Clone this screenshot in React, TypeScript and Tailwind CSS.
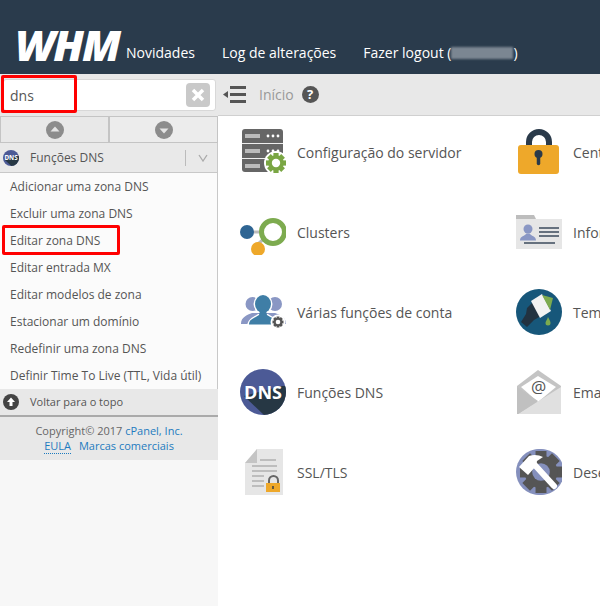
import * as React from "react";

const FONT = "font-['Open_Sans',sans-serif]";

function Gear({ cx, cy, r, fill, halo }: { cx: number; cy: number; r: number; fill: string; halo: string }) {
  const angles = [0, 45, 90, 135];
  return (
    <g>
      <circle cx={cx} cy={cy} r={r + 2} fill={halo} />
      {angles.map((a) => (
        <rect
          key={a}
          x={cx - r * 0.26}
          y={cy - r}
          width={r * 0.52}
          height={r * 2}
          fill={fill}
          transform={`rotate(${a} ${cx} ${cy})`}
        />
      ))}
      <circle cx={cx} cy={cy} r={r * 0.78} fill={fill} />
      <circle cx={cx} cy={cy} r={r * 0.42} fill={halo} />
    </g>
  );
}

function Icon({ children, size = 46 }: { children: React.ReactNode; size?: number }) {
  return (
    <svg width={size} height={size} viewBox="0 0 46 46" className="shrink-0">
      {children}
    </svg>
  );
}

function ServerIcon() {
  return (
    <Icon>
      <rect x="2" y="0" width="41" height="43" rx="3" fill="#666" />
      <rect x="2" y="14" width="41" height="1" fill="#eee" />
      <rect x="2" y="29" width="41" height="1" fill="#eee" />
      <rect x="5" y="5" width="15" height="4" fill="#bbb" />
      <rect x="5" y="20" width="15" height="4" fill="#bbb" />
      <rect x="5" y="35" width="15" height="4" fill="#bbb" />
      {[28, 33, 38].map((x) => (
        <React.Fragment key={x}>
          <circle cx={x} cy="7" r="1.4" fill="#fff" />
          <circle cx={x} cy="22" r="1.4" fill="#fff" />
        </React.Fragment>
      ))}
      <Gear cx={36} cy={34} r={10} fill="#7aa644" halo="#fff" />
    </Icon>
  );
}

function ClusterIcon() {
  return (
    <Icon>
      <path d="M13 23H25M18 35L26 28" stroke="#bbb" strokeWidth="3" />
      <circle cx="33" cy="23" r="11.5" fill="#fff" stroke="#7dab4f" strokeWidth="5" />
      <circle cx="7" cy="23" r="7" fill="#2f6593" />
      <circle cx="18" cy="40" r="7" fill="#eea82a" />
    </Icon>
  );
}

function UsersIcon() {
  return (
    <Icon>
      <circle cx="12.5" cy="15" r="7" fill="#8a97c4" />
      <circle cx="35" cy="15" r="7" fill="#8a97c4" />
      <path d="M1 35C1 28 7 26 12 24H35C40 26 46 28 46 35Z" fill="#8a97c4" />
      <circle cx="23" cy="15" r="9.5" fill="#fff" />
      <path d="M7 37C8 29 14 28 18 25H28C32 28 38 29 39 37Z" fill="#fff" />
      <ellipse cx="23" cy="15" rx="8" ry="9" fill="#3f7ea6" />
      <path d="M9 35.500C9 30 15 29 19 26L20 22H26L27 26C31 29 37 30 37 35.500Z" fill="#3f7ea6" />
      <Gear cx={38} cy={33} r={5.500} fill="#555" halo="#fff" />
    </Icon>
  );
}

function DnsIcon({ id, size = 46 }: { id: string; size?: number }) {
  return (
    <Icon size={size}>
      <clipPath id={id}>
        <circle cx="23" cy="23" r="23" />
      </clipPath>
      <circle cx="23" cy="23" r="23" fill="#4c5a96" />
      <polygon points="4,27 24,46 46,46 46,17 42,17" fill="#263744" clipPath={`url(#${id})`} />
      <text x="23" y="29.500" textAnchor="middle" fontSize="18" fontWeight="700" fill="#fff" fontFamily="'Open Sans',sans-serif">
        DNS
      </text>
    </Icon>
  );
}

function SslIcon() {
  return (
    <Icon>
      <polygon points="17,0 43,0 43,46 5,46 5,14" fill="#e6e6e6" />
      <polygon points="17,0 17,14 5,14" fill="#c4c4c4" />
      <path d="M20 11H36M12 17H37M12 22H37M12 27H24M12 32H24M12 37H24" stroke="#bdbdbd" strokeWidth="1.800" />
      <path d="M29 35V31.500a4.500 4.500 0 0 1 9 0V35" fill="none" stroke="#666" strokeWidth="2" />
      <rect x="26" y="34" width="14" height="9" fill="#eea82a" />
      <rect x="32.200" y="37" width="1.600" height="3" fill="#444" />
    </Icon>
  );
}

function LockIcon() {
  return (
    <Icon>
      <path d="M13 18V13a10 10 0 0 1 20 0V18" fill="none" stroke="#2a3a4a" strokeWidth="6" />
      <rect x="2" y="16" width="41" height="29" rx="3" fill="#eea82a" />
      <circle cx="22.500" cy="25" r="4" fill="#2a3a4a" />
      <path d="M22.500 26V34.500" stroke="#2a3a4a" strokeWidth="3.500" strokeLinecap="round" />
    </Icon>
  );
}

function CardIcon() {
  return (
    <Icon>
      <path d="M0 10V6H18L20 10Z" fill="#bdbdbd" />
      <rect x="0" y="10" width="46" height="30" fill="#e6e6e6" />
      <circle cx="12" cy="20" r="4.500" fill="#8a97c4" />
      <path d="M4 31.500C4 27 9 27 10.500 24.500H13.500C15 27 20 27 20 31.500Z" fill="#8a97c4" />
      <path d="M23 19H43M23 23H43M23 27H43M8 34H39" stroke="#3d4b5c" strokeWidth="1.600" />
    </Icon>
  );
}

function BrushIcon() {
  return (
    <Icon>
      <circle cx="23" cy="23" r="23" fill="#17577a" />
      <polygon points="11,19 17,13 25,27 18,31 11,38 5,33 10,25" fill="#223240" />
      <polygon points="15,12 26,5 35,22 24,29" fill="#f2f2f2" />
      <polygon points="26,6 37,9 34,21" fill="#7dab4f" />
      <path d="M32 28C33.500 31 34.500 32 34.500 34a2.500 2.500 0 0 1-5 0C29.500 32 31 31 32 28Z" fill="#7dab4f" />
    </Icon>
  );
}

function MailIcon() {
  return (
    <Icon>
      <polygon points="22,1 45,17 45,45 1,45 1,17" fill="#c4c4c4" />
      <polygon points="22,7 40,18 22,33 5,18" fill="#fff" />
      <polygon points="45,18 45,45 2,45" fill="#e0e0e0" />
      <polygon points="1,18 22,32 2,45 1,45" fill="#c0c0c0" />
      <text x="22.500" y="24" textAnchor="middle" fontSize="17" fill="#555" fontFamily="'Open Sans',sans-serif">
        @
      </text>
    </Icon>
  );
}

function ToolsIcon() {
  return (
    <Icon>
      <circle cx="23" cy="23" r="23" fill="#8590bd" />
      <Gear cx={25} cy={23} r={21} fill="#555" halo="#8590bd" />
      <path d="M17 14L38 37" stroke="#fff" strokeWidth="6" strokeLinecap="round" />
      <path d="M3 18L13 7C18 5 23 6 27 8L21 12L20 17L12 26Z" fill="#fff" />
    </Icon>
  );
}

const navLinks = ["Novidades", "Log de alterações"];

const menuItems = [
  "Adicionar uma zona DNS",
  "Excluir uma zona DNS",
  "Editar zona DNS",
  "Editar entrada MX",
  "Editar modelos de zona",
  "Estacionar um domínio",
  "Redefinir uma zona DNS",
  "Definir Time To Live (TTL, Vida útil)",
];

const leftTools: { label: string; icon: React.ReactNode }[] = [
  { label: "Configuração do servidor", icon: <ServerIcon /> },
  { label: "Clusters", icon: <ClusterIcon /> },
  { label: "Várias funções de conta", icon: <UsersIcon /> },
  { label: "Funções DNS", icon: <DnsIcon id="dns-large" /> },
  { label: "SSL/TLS", icon: <SslIcon /> },
];

const rightTools: { label: string; icon: React.ReactNode }[] = [
  { label: "Central de segurança", icon: <LockIcon /> },
  { label: "Informações do servidor", icon: <CardIcon /> },
  { label: "Temas", icon: <BrushIcon /> },
  { label: "Email", icon: <MailIcon /> },
  { label: "Desenvolvimento", icon: <ToolsIcon /> },
];

function ToolColumn({ tools, className }: { tools: typeof leftTools; className: string }) {
  return (
    <div className={`flex flex-col gap-[34px] ${className}`}>
      {tools.map((tool) => (
        <div key={tool.label} className="flex items-center gap-[11px] h-[46px] whitespace-nowrap">
          {tool.icon}
          <span className="text-[14px] text-[#555]">{tool.label}</span>
        </div>
      ))}
    </div>
  );
}

function ArrowButton({ up, dotted }: { up?: boolean; dotted?: boolean }) {
  return (
    <div className={`flex-1 flex items-center justify-center border border-[#c4c4c4] ${dotted ? "bg-[#ececec]" : "bg-[#e8e8e8]"}`}>
      <svg width="18" height="18" viewBox="0 0 18 18">
        <circle cx="9" cy="9" r="9" fill="#8c8c8c" />
        <polygon points={up ? "9,5.500 13.500,10.500 4.500,10.500" : "9,12.500 13.500,7.500 4.500,7.500"} fill="#e4e4e4" />
      </svg>
    </div>
  );
}

export default function App() {
  return (
    <div className={`relative w-[600px] h-[606px] overflow-hidden flex flex-col bg-white ${FONT}`}>
      <header className="h-[74px] shrink-0 bg-[#2a3b4c] flex items-end pb-[11px] pl-[15px] text-white">
        <span className="w-[111px] font-['Open_Sans',sans-serif] italic font-extrabold text-[43px] leading-[36px] tracking-[-2px] text-white">
          WHM
        </span>
        <nav className="flex gap-[27px] text-[14px] leading-[20px] whitespace-nowrap">
          {navLinks.map((link) => (
            <span key={link}>{link}</span>
          ))}
          <span className="flex items-center">
            Fazer logout (
            <span className="inline-block w-[62px] h-[12px] bg-[#7b8692] blur-[1px]" />)
          </span>
        </nav>
      </header>

      <div className="flex flex-1 min-h-0">
        <aside className="w-[218px] shrink-0 flex flex-col bg-[#f7f7f7]">
          <div className="h-[42px] shrink-0 bg-[#e8e8e8] pt-[5px] pl-[3px] pr-[2px]">
            <div className="h-[32px] bg-white border border-[#d8d8d8] rounded-[3px] flex items-center justify-between pl-[6px] pr-[5px]">
              <span className="text-[14px] text-[#555]">dns</span>
              <span className="w-[24px] h-[24px] rounded-[4px] bg-[#c9c9c9] flex items-center justify-center">
                <svg width="14" height="14" viewBox="0 0 14 14">
                  <path d="M2 2L12 12M12 2L2 12" stroke="#fff" strokeWidth="3.500" />
                </svg>
              </span>
            </div>
          </div>
          <div className="h-[27px] shrink-0 flex">
            <ArrowButton up />
            <ArrowButton dotted />
          </div>
          <div className="h-[30px] shrink-0 bg-[#e9e9e9] border-b border-[#c8c8c8] border-r flex items-center pl-[3px] text-[12px] text-[#555]">
            <DnsIcon id="dns-small" size={16} />
            <span className="ml-[11px]">Funções DNS</span>
            <span className="ml-auto mr-[9px] flex items-center h-[16px] border-l border-[#bbb] pl-[12px]">
              <svg width="10" height="8" viewBox="0 0 10 8">
                <path d="M1 1L5 7L9 1" fill="none" stroke="#aaa" strokeWidth="1.300" />
              </svg>
            </span>
          </div>
          <ul className="shrink-0 bg-[#fbfbfb] border-r border-[#c8c8c8]">
            {menuItems.map((item) => (
              <li key={item} className="h-[27px] leading-[27px] pl-[10px] text-[12px] text-[#555] whitespace-nowrap">
                {item}
              </li>
            ))}
          </ul>
          <div className="h-[28px] shrink-0 bg-[#e8e8e8] border-b-2 border-[#aaa] flex items-center pl-[3px] text-[11px] text-[#555]">
            <svg width="16" height="16" viewBox="0 0 16 16">
              <circle cx="8" cy="8" r="8" fill="#444" />
              <path d="M8 3.500L12 8H9.500V12H6.500V8H4Z" fill="#fff" />
            </svg>
            <span className="ml-[11px]">Voltar para o topo</span>
          </div>
          <footer className="h-[43px] shrink-0 bg-[#e8e8e8] pt-[6px] text-center text-[11px] leading-[15px] text-[#666]">
            <p>
              Copyright© 2017 <span className="text-[#1d7bbf]">cPanel, Inc.</span>
            </p>
            <p className="text-[#1d7bbf]">
              <span className="border-b border-dotted border-[#1d7bbf]">EULA</span>
              <span className="ml-[8px]">Marcas comerciais</span>
            </p>
          </footer>
        </aside>

        <main className="flex-1 min-w-0 flex flex-col">
          <div className="h-[42px] shrink-0 bg-[#e8e8e8] border-b border-[#d0d0d0] flex items-center pl-[5px]">
            <svg width="24" height="20" viewBox="0 0 24 20">
              <polygon points="0,9.500 5,6 5,13" fill="#555" />
              <path d="M7 2.500H23M7 9.500H23M7 16.500H23" stroke="#555" strokeWidth="3" />
            </svg>
            <span className="ml-[12px] text-[14px] text-[#999]">Início</span>
            <span className="ml-[8px] w-[17px] h-[17px] rounded-full bg-[#555] text-white text-[13px] font-bold leading-[17px] text-center">
              ?
            </span>
          </div>
          <div className="flex pt-[13px] pl-[22px]">
            <ToolColumn tools={leftTools} className="w-[276px] shrink-0" />
            <ToolColumn tools={rightTools} className="shrink-0" />
          </div>
        </main>
      </div>

      <div className="absolute left-[1px] top-[75px] w-[76px] h-[38px] border-[3px] border-[#f00] rounded-[2px]" />
      <div className="absolute left-[2px] top-[225px] w-[118px] h-[30px] border-[3px] border-[#f00] rounded-[2px]" />
    </div>
  );
}
